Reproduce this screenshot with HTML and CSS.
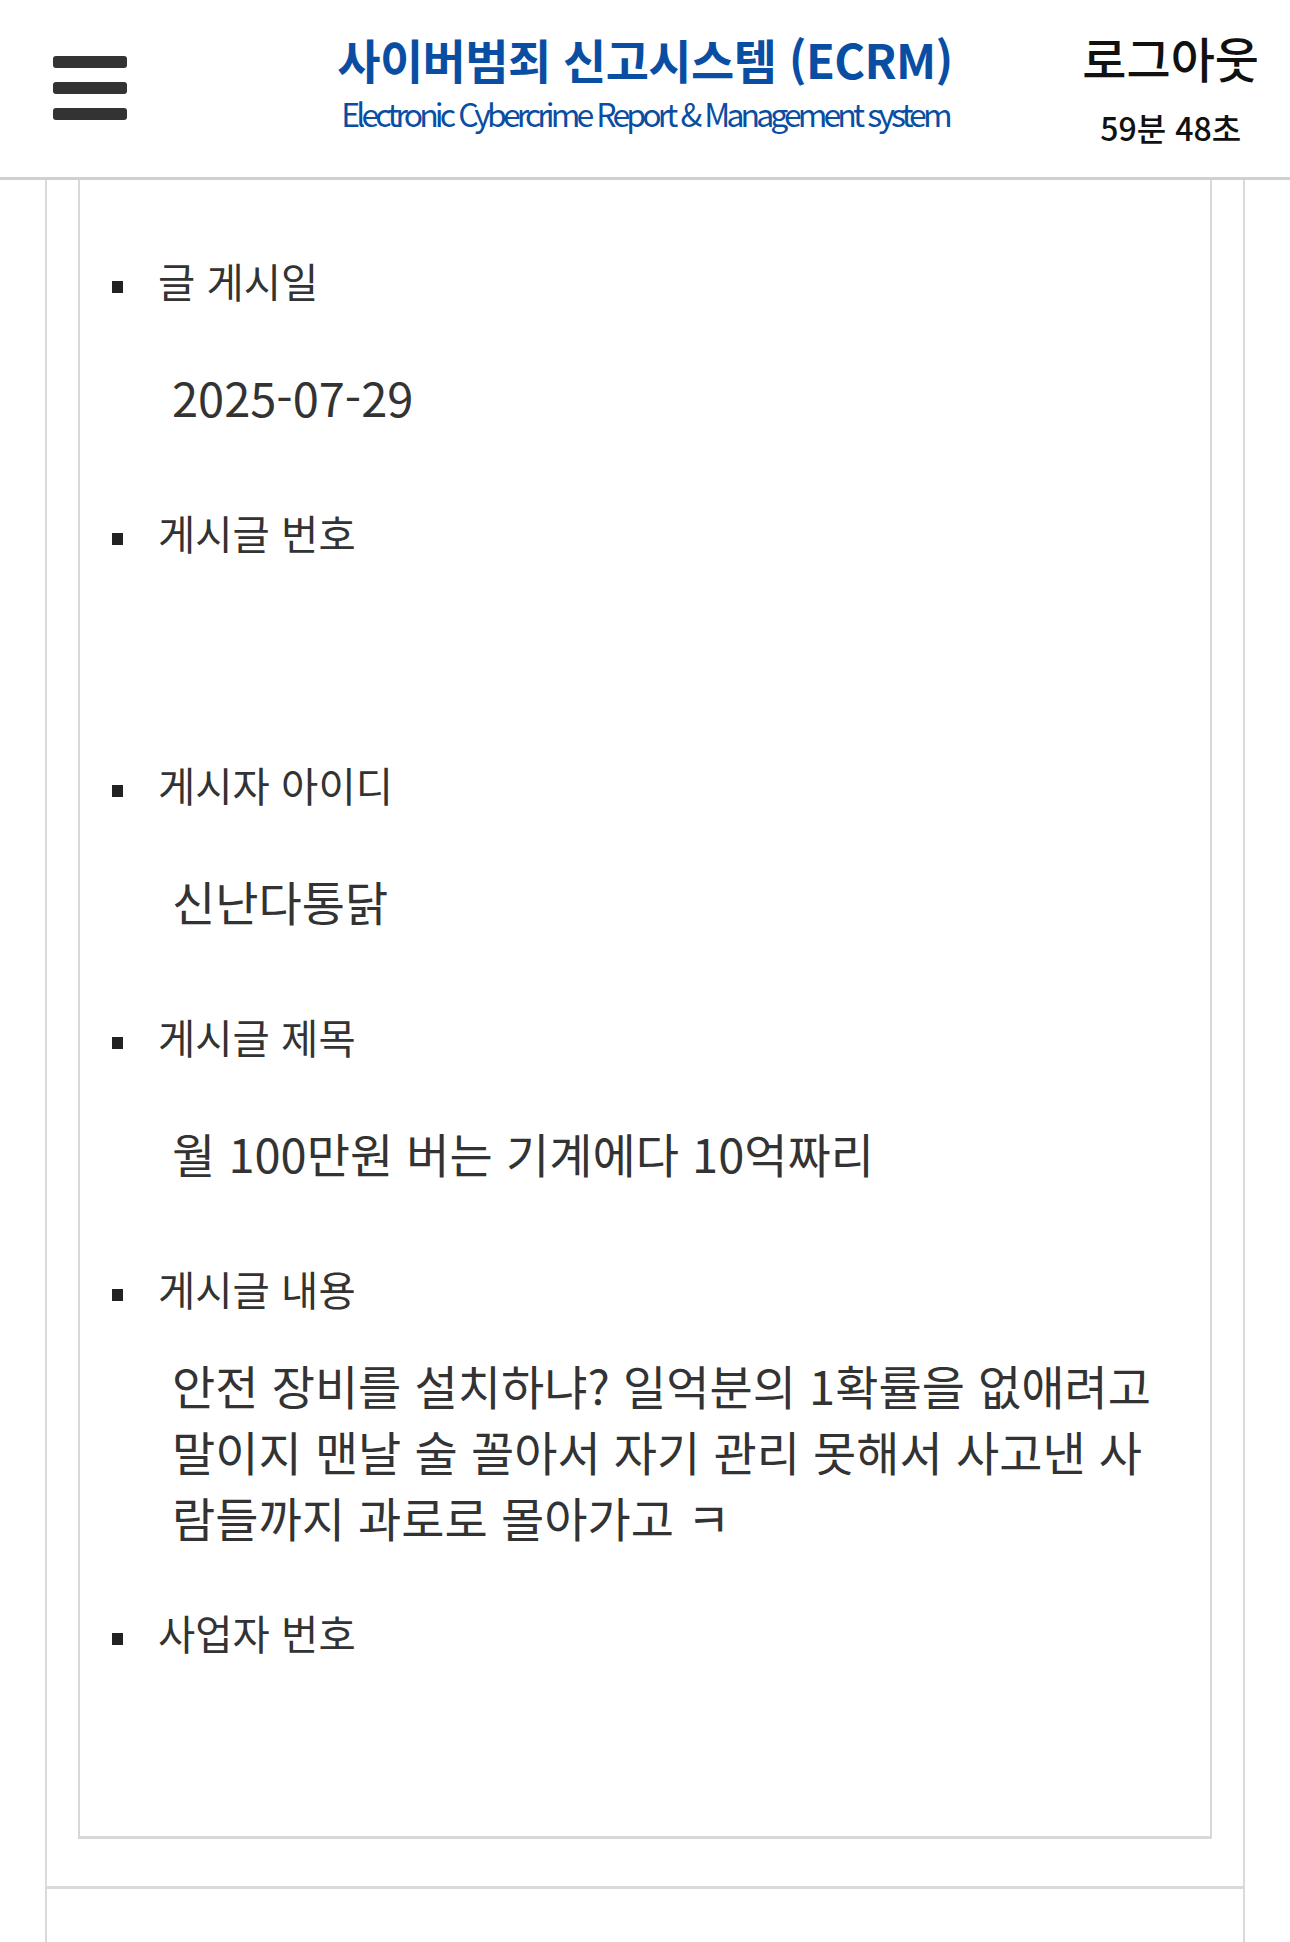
FILE: index.html
```html
<!DOCTYPE html>
<html lang="ko">
<head>
<meta charset="utf-8">
<title>사이버범죄 신고시스템 (ECRM)</title>
<link rel="stylesheet" href="styles.css">
</head>
<body>
<header class="top">
  <button class="menu" type="button" aria-label="메뉴">
    <span class="menu-bar"></span>
    <span class="menu-bar"></span>
    <span class="menu-bar"></span>
  </button>
  <div class="brand">
    <h1 class="brand-title">사이버범죄 신고시스템 (ECRM)</h1>
    <p class="brand-sub">Electronic Cybercrime Report &amp; Management system</p>
  </div>
  <div class="session">
    <a class="logout" href="#">로그아웃</a>
    <span class="timer">59분 48초</span>
  </div>
</header>
<main class="frame">
  <section class="panel">
    <div class="detail-box">
      <ul class="fields">
        <li class="field">
          <div class="label">글 게시일</div>
          <div class="value">2025-07-29</div>
        </li>
        <li class="field">
          <div class="label">게시글 번호</div>
          <div class="value"></div>
        </li>
        <li class="field">
          <div class="label">게시자 아이디</div>
          <div class="value">신난다통닭</div>
        </li>
        <li class="field">
          <div class="label">게시글 제목</div>
          <div class="value">월 100만원 버는 기계에다 10억짜리</div>
        </li>
        <li class="field">
          <div class="label">게시글 내용</div>
          <div class="value">안전 장비를 설치하냐? 일억분의 1확률을 없애려고 말이지 맨날 술 꼴아서 자기 관리 못해서 사고낸 사람들까지 과로로 몰아가고 ㅋ</div>
        </li>
        <li class="field">
          <div class="label">사업자 번호</div>
          <div class="value"></div>
        </li>
      </ul>
    </div>
  </section>
  <section class="panel-next"></section>
</main>
</body>
</html>
```
FILE: styles.css
```css
* {
  box-sizing: border-box;
}

html, body {
  margin: 0;
  padding: 0;
  background: #ffffff;
}

body {
  font-family: "Noto Sans CJK KR", "Noto Sans", sans-serif;
  color: #333333;
}

/* Header */
.top {
  display: grid;
  grid-template-columns: 1fr auto 1fr;
  align-items: center;
  height: 180px;
  padding: 0 33px;
  border-bottom: 3px solid #d0d0d0;
  background: #ffffff;
}

.menu {
  justify-self: start;
  margin-left: 20px;
  display: flex;
  flex-direction: column;
  gap: 14px;
  padding: 0;
  border: 0;
  background: transparent;
  margin-top: -2px;
}

.menu-bar {
  display: block;
  width: 74px;
  height: 12px;
  border-radius: 3px;
  background: #333333;
}

.brand {
  display: flex;
  flex-direction: column;
  align-items: center;
  gap: 6px;
  padding-bottom: 14px;
}

.brand-title {
  margin: 0;
  font-size: 47px;
  line-height: 56px;
  font-weight: 700;
  color: #0a4ea3;
  letter-spacing: -0.6px;
  white-space: nowrap;
}

.brand-sub {
  margin: 0;
  font-size: 32px;
  line-height: 40px;
  font-weight: 400;
  color: #0a4ea3;
  letter-spacing: -3.9px;
  word-spacing: 1px;
  white-space: nowrap;
}

.session {
  justify-self: end;
  display: flex;
  flex-direction: column;
  align-items: center;
  gap: 20px;
  padding-bottom: 4px;
  margin-right: -2px;
}

.logout {
  font-size: 48px;
  line-height: 60px;
  color: #111111;
  text-decoration: none;
  font-weight: 500;
}

.timer {
  font-size: 32px;
  line-height: 40px;
  font-weight: 500;
  color: #111111;
}

/* Content frame */
.frame {
  margin: 0 45px;
  border-left: 2px solid #dadada;
  border-right: 2px solid #dadada;
  min-height: 1762px;
}

.panel {
  padding: 0 31px 47px;
  border-bottom: 3px solid #dadada;
}

.detail-box {
  border: 2px solid #d8d8d8;
  border-top: 0;
  border-bottom-width: 3px;
}

.fields {
  list-style: none;
  margin: 0;
  padding: 64px 0 6px 32px;
  display: flex;
  flex-direction: column;
  gap: 18px;
}

.label {
  display: flex;
  align-items: center;
  height: 72px;
  font-size: 40.5px;
  color: #333333;
}

.label::before {
  content: "";
  flex: none;
  width: 11px;
  height: 12px;
  margin: 13px 35px 0 0;
  background: #222222;
}

.value {
  display: flex;
  align-items: center;
  min-height: 162px;
  padding: 28px 40px 28px 60px;
  font-size: 47px;
  line-height: 66px;
  color: #333333;
}

.panel-next {
  height: 100px;
}
```
